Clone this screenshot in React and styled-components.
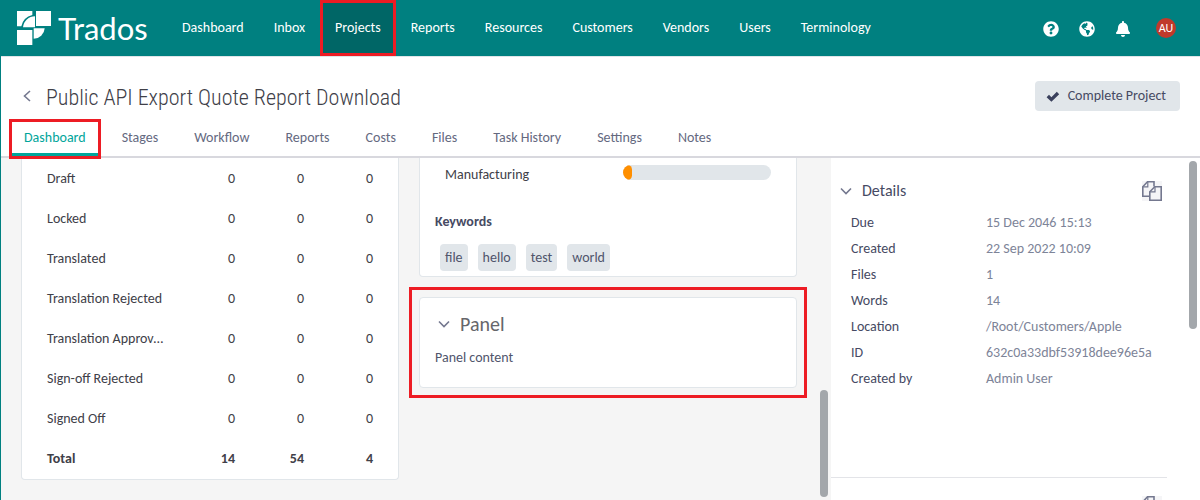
import React from "react";
import styled, { createGlobalStyle, css } from "styled-components";
import { FaQuestionCircle, FaGlobeAmericas, FaBell } from "react-icons/fa";

const GlobalStyle = createGlobalStyle`
  *, *::before, *::after { box-sizing: border-box; }
  body {
    margin: 0;
    background: #f5f5f5;
    color: #404048;
    font: 14px/18px Carlito, Calibri, Lato, sans-serif;
  }
  button { font: inherit; color: inherit; border: 0; padding: 0; background: none; cursor: pointer; }
  a { color: inherit; text-decoration: none; }
  h1, h2, h3, dl, dd, ul { margin: 0; padding: 0; font-weight: 400; }
  svg { display: block; flex: none; }
`;

const highlight = css`
  outline: 3px solid #ed1c24;
  position: relative;
  z-index: 1;
`;

const Shell = styled.div`
  display: flex;
  flex-direction: column;
  height: 100vh;
  overflow: hidden;
  border-left: 1px solid #008080;
`;

const TopBar = styled.header`
  display: flex;
  flex: none;
  align-items: stretch;
  height: 57px;
  padding: 0 24px 0 16px;
  background: #008080;
  border-bottom: 1px solid #dfe5e8;
  color: #fff;
`;

const Brand = styled.a`
  display: flex;
  align-items: center;
  gap: 7px;
  width: 150px;
  font: 31px/36px Lato, sans-serif;
`;

const MainNav = styled.nav`
  display: flex;
  flex: 1;
`;

const NavLink = styled.a`
  display: flex;
  align-items: center;
  padding: 0 15px;
  ${(p) =>
    p.$active &&
    css`
      background: #006666;
      ${highlight}
      outline-offset: -3px;
    `}
`;

const Tools = styled.div`
  display: flex;
  align-items: center;
  gap: 20px;
`;

const IconButton = styled.button`
  padding-top: 2px;
`;

const Avatar = styled.button`
  width: 20px;
  height: 20px;
  margin-left: 5px;
  border-radius: 50%;
  background: #c0392b;
  font-size: 12px;
  line-height: 20px;
`;

const PageHead = styled.div`
  flex: none;
  background: #fff;
  border-bottom: 2px solid #d8d8de;
`;

const TitleRow = styled.div`
  display: flex;
  align-items: center;
  gap: 10px;
  padding: 24px 20px 11px 17px;
`;

const Title = styled.h1`
  flex: 1;
  padding-top: 4px;
  font: 300 22px/26px "Roboto Condensed", Roboto, sans-serif;
`;

const ActionButton = styled.button`
  display: flex;
  align-items: center;
  gap: 8px;
  height: 30px;
  padding: 0 14px 0 11px;
  border-radius: 4px;
  background: #e1e6ea;
  color: #464a63;
`;

const Tabs = styled.nav`
  display: flex;
  gap: 12px;
  padding: 0 11px;
`;

const Tab = styled.a`
  height: 34px;
  padding: 0 12px;
  border-bottom: 3px solid transparent;
  line-height: 31px;
  color: #64697f;
  ${(p) =>
    p.$active &&
    css`
      color: #00a59b;
      border-color: #00a59b;
      ${highlight}
    `}
`;

const Body = styled.div`
  display: flex;
  flex: 1;
  min-height: 0;
`;

const Board = styled.main`
  display: grid;
  flex: 1;
  grid-template-columns: 1fr 1fr;
  align-items: start;
  gap: 20px;
  padding: 0 23px 20px 20px;
  overflow: hidden;
`;

const Column = styled.div`
  display: grid;
  gap: 20px;
`;

const Card = styled.section`
  background: #fff;
  border: 1px solid #e1e6ea;
  border-radius: 4px;
  ${(p) =>
    p.$continued &&
    css`
      border-top: 0;
      border-top-left-radius: 0;
      border-top-right-radius: 0;
    `}
`;

const Marked = styled.div`
  ${highlight}
  outline-offset: 7px;
`;

const StatusTable = styled.table`
  width: 100%;
  margin-top: 1px;
  table-layout: fixed;
  border-collapse: collapse;
`;

const StatusName = styled.th`
  height: 40px;
  padding: 0 0 0 25px;
  overflow: hidden;
  text-align: left;
  text-overflow: ellipsis;
  white-space: nowrap;
  font-weight: ${(p) => (p.$total ? 700 : 400)};
`;

const StatusValue = styled.td`
  width: 69px;
  padding: 0;
  text-align: right;
  font-weight: ${(p) => (p.$total ? 700 : 400)};
  &:last-child {
    width: 94px;
    padding-right: 25px;
  }
`;

const Field = styled.div`
  display: flex;
  justify-content: space-between;
  padding: 7px 25px 0;
  line-height: 20px;
`;

const Meter = styled.div`
  width: 148px;
  height: 15px;
  border-radius: 8px;
  background: #e1e6ea;
  overflow: hidden;
`;

const MeterFill = styled.div`
  height: 100%;
  border-radius: 8px;
  background: #ff8f00;
`;

const Subheading = styled.h3`
  margin: 28px 15px 0;
  font-size: 14px;
  font-weight: 700;
  line-height: 18px;
  color: #464a63;
`;

const Tags = styled.ul`
  display: flex;
  gap: 10px;
  padding: 13px 20px 5px;
  list-style: none;
`;

const Tag = styled.li`
  padding: 0 5px;
  border-radius: 4px;
  background: #e1e6ea;
  color: #50556c;
  line-height: 27px;
`;

const PanelHead = styled.button`
  display: flex;
  align-items: center;
  gap: 7px;
  margin: 14px 15px 13px;
`;

const PanelTitle = styled.span`
  font-size: 20px;
  line-height: 24px;
  color: #66666b;
`;

const PanelText = styled.div`
  padding: 0 15px 20px;
  color: #50556c;
`;

const Scrollbar = styled.div`
  display: flex;
  flex: none;
  flex-direction: column;
  justify-content: ${(p) => (p.$end ? "flex-end" : "flex-start")};
  width: 11px;
  padding: 3px 3px 3px 0;
`;

const Thumb = styled.div`
  width: 8px;
  height: ${(p) => p.$length};
  border-radius: 4px;
  background: #a3a7ab;
`;

const Sidebar = styled.aside`
  display: flex;
  flex: none;
  width: 369px;
  background: #fff;
`;

const SideContent = styled.div`
  flex: 1;
  margin-right: 22px;
  padding-top: 5px;
  overflow: hidden;
`;

const SideSection = styled.section`
  padding: 18px 5px 85px 6px;
  & + & {
    border-top: 1px solid #e3e4e8;
  }
`;

const SideHead = styled.div`
  display: flex;
  align-items: center;
  justify-content: flex-end;
  height: 20px;
`;

const SideToggle = styled.button`
  display: flex;
  flex: 1;
  align-items: center;
  gap: 7px;
  font-size: 16px;
  line-height: 20px;
  color: #464a63;
`;

const CopyButton = styled.button`
  background: #f5f5f7;
`;

const Facts = styled.dl`
  display: grid;
  grid-template-columns: 135px 1fr;
  padding: 9px 0 0 14px;
  line-height: 26px;
  color: #464a63;
`;

const FactValue = styled.dd`
  color: #7d8498;
`;

const Logo = () => (
  <svg width="34" height="34" viewBox="0 0 102 102" fill="#fff" aria-hidden="true">
    <path d="M0 0H46V12A44 44 0 0 0 13 46H0Z" />
    <path d="M57 0H102V45H57Z" />
    <path d="M54 16V49H18A36 36 0 0 1 54 16Z" />
    <path d="M50 52H83A33 33 0 0 1 50 83Z" />
    <path d="M0 57H46V102H0Z" />
  </svg>
);

const Chevron = ({ left }) => (
  <svg width="18" height="18" viewBox="0 0 18 18" fill="none" stroke="#74788f" strokeWidth="1.6" aria-hidden="true">
    <path d={left ? "M12 4L6.500 9L12 14" : "M4 6.500L9 11.500L14 6.500"} />
  </svg>
);

const Check = () => (
  <svg width="14" height="14" viewBox="0 0 14 14" fill="#3a405c" aria-hidden="true">
    <path d="M.6 8.200L3 5.800L5.400 8.200L10.800 2.800L13.200 5.200L5.400 12.800Z" />
  </svg>
);

const CopyIcon = () => (
  <svg width="20" height="20" viewBox="0 0 20 20" fill="none" stroke="#74788f" strokeWidth="1.6" aria-hidden="true">
    <path d="M7.500 15.200H.8V5.800L5.500.8H12V5.500" />
    <path d="M5.800.8V5.800H.8" strokeWidth="1.200" />
    <path d="M7.800 19.200V10.800L12.800 5.800H19.200V19.200Z" />
    <path d="M13 5.800V10.800H7.800" strokeWidth="1.200" />
  </svg>
);

const NAV = ["Dashboard", "Inbox", "Projects", "Reports", "Resources", "Customers", "Vendors", "Users", "Terminology"];
const TABS = ["Dashboard", "Stages", "Workflow", "Reports", "Costs", "Files", "Task History", "Settings", "Notes"];
const STATUSES = [
  ["Draft", 0, 0, 0],
  ["Locked", 0, 0, 0],
  ["Translated", 0, 0, 0],
  ["Translation Rejected", 0, 0, 0],
  ["Translation Approved", 0, 0, 0],
  ["Sign-off Rejected", 0, 0, 0],
  ["Signed Off", 0, 0, 0],
  ["Total", 14, 54, 4],
];
const KEYWORDS = ["file", "hello", "test", "world"];
const FACTS = [
  ["Due", "15 Dec 2046 15:13"],
  ["Created", "22 Sep 2022 10:09"],
  ["Files", "1"],
  ["Words", "14"],
  ["Location", "/Root/Customers/Apple"],
  ["ID", "632c0a33dbf53918dee96e5a"],
  ["Created by", "Admin User"],
];

export default function App() {
  const progress = 6;
  return (
    <Shell>
      <GlobalStyle />
      <TopBar>
        <Brand href="#home">
          <Logo />
          Trados
        </Brand>
        <MainNav>
          {NAV.map((name) => (
            <NavLink key={name} href={"#" + name} $active={name === "Projects"}>
              {name}
            </NavLink>
          ))}
        </MainNav>
        <Tools>
          <IconButton aria-label="Help"><FaQuestionCircle size={16} /></IconButton>
          <IconButton aria-label="Language"><FaGlobeAmericas size={16} /></IconButton>
          <IconButton aria-label="Notifications"><FaBell size={16} /></IconButton>
          <Avatar>AU</Avatar>
        </Tools>
      </TopBar>

      <PageHead>
        <TitleRow>
          <button aria-label="Back"><Chevron left /></button>
          <Title>Public API Export Quote Report Download</Title>
          <ActionButton>
            <Check />
            Complete Project
          </ActionButton>
        </TitleRow>
        <Tabs>
          {TABS.map((name, i) => (
            <Tab key={name} href={"#tab-" + i} $active={i === 0}>
              {name}
            </Tab>
          ))}
        </Tabs>
      </PageHead>

      <Body>
        <Board>
          <Card $continued>
            <StatusTable>
              <tbody>
                {STATUSES.map(([name, ...values]) => (
                  <tr key={name}>
                    <StatusName scope="row" $total={name === "Total"}>{name}</StatusName>
                    {values.map((value, i) => (
                      <StatusValue key={i} $total={name === "Total"}>{value}</StatusValue>
                    ))}
                  </tr>
                ))}
              </tbody>
            </StatusTable>
          </Card>
          <Column>
            <Card $continued>
              <Field>
                <span id="field-manufacturing">Manufacturing</span>
                <Meter role="progressbar" aria-labelledby="field-manufacturing" aria-valuenow={progress}>
                  <MeterFill style={{ width: `${progress}%` }} />
                </Meter>
              </Field>
              <Subheading>Keywords</Subheading>
              <Tags>
                {KEYWORDS.map((word) => (
                  <Tag key={word}>{word}</Tag>
                ))}
              </Tags>
            </Card>
            <Marked>
              <Card>
                <PanelHead aria-expanded="true">
                  <Chevron />
                  <PanelTitle>Panel</PanelTitle>
                </PanelHead>
                <PanelText>Panel content</PanelText>
              </Card>
            </Marked>
          </Column>
        </Board>
        <Scrollbar $end>
          <Thumb $length="107px" />
        </Scrollbar>

        <Sidebar>
          <SideContent>
            <SideSection>
              <SideHead>
                <SideToggle aria-expanded="true">
                  <Chevron />
                  Details
                </SideToggle>
                <CopyButton aria-label="Copy"><CopyIcon /></CopyButton>
              </SideHead>
              <Facts>
                {FACTS.map(([label, value]) => (
                  <React.Fragment key={label}>
                    <dt>{label}</dt>
                    <FactValue>{value}</FactValue>
                  </React.Fragment>
                ))}
              </Facts>
            </SideSection>
            <SideSection>
              <SideHead>
                <CopyButton aria-label="Copy"><CopyIcon /></CopyButton>
              </SideHead>
            </SideSection>
          </SideContent>
          <Scrollbar>
            <Thumb $length="168px" />
          </Scrollbar>
        </Sidebar>
      </Body>
    </Shell>
  );
}
